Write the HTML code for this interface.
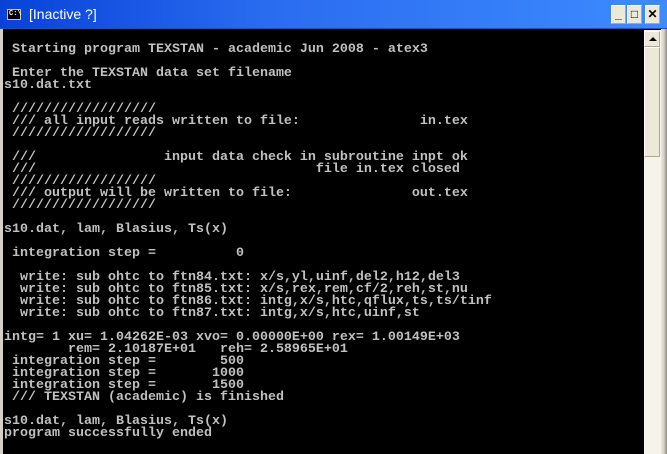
<!DOCTYPE html>
<html><head><style>
*{margin:0;padding:0;box-sizing:border-box}
body{width:667px;height:454px;overflow:hidden;background:#000;position:relative;font-family:"Liberation Sans",sans-serif}
.title{position:absolute;left:0;top:0;width:667px;height:29px;background:linear-gradient(90deg,#0842d8 0%,#2a6cf0 40%,#3d8bff 100%);border-bottom:1px solid #1a4fc8}
.title .txt{position:absolute;left:29px;top:6px;color:#fff;font-size:14px}
.icon{position:absolute;left:7px;top:9px;width:14px;height:11px;background:#000;border:1px solid #c0c0c0}
.icon span{position:absolute;left:1px;top:0;color:#fff;font:bold 7px "Liberation Mono",monospace;line-height:9px}
.btn{position:absolute;top:5px;width:15px;height:19px;background:#ece9d8;border:1px solid #fff;border-right-color:#aca899;border-bottom-color:#aca899;font:bold 12px "Liberation Sans",sans-serif;color:#000;text-align:center;line-height:17px}
.con{position:absolute;left:3px;top:30px;width:641px;height:424px;background:#000}
pre{position:absolute;left:4px;top:32px;font:bold 13.33px/12px "Liberation Mono",monospace;color:#c0c0c0;letter-spacing:0}
.sb{position:absolute;left:644px;top:30px;width:17px;height:424px;background:#f6f4ea}
.up{position:absolute;left:644px;top:31px;width:16px;height:16px;background:#ece9d8;border:1px solid #fff;border-right-color:#aca899;border-bottom-color:#aca899}
.up:after{content:"";position:absolute;left:4px;top:5px;border-left:4px solid transparent;border-right:4px solid transparent;border-bottom:4px solid #000}
.thumb{position:absolute;left:644px;top:47px;width:16px;height:110px;background:#ece9d8;border:1px solid #fff;border-right-color:#aca899;border-bottom-color:#aca899}
.frame{position:absolute;left:661px;top:29px;width:6px;height:425px;background:linear-gradient(90deg,#ece9d8,#d4d0c8 50%,#8a877a)}
.lframe{position:absolute;left:0;top:29px;width:3px;height:425px;background:#d4d0c8}
</style></head><body>
<div class="title"><div class="icon"><span>C:\</span></div><div class="txt">[Inactive ?]</div>
<div class="btn" style="left:611px">_</div><div class="btn" style="left:627px">□</div><div class="btn" style="left:645px">✕</div></div>
<div class="lframe"></div>
<div class="con"></div>
<pre>

 Starting program TEXSTAN - academic Jun 2008 - atex3

 Enter the TEXSTAN data set filename
s10.dat.txt

 //////////////////
 /// all input reads written to file:               in.tex
 //////////////////

 ///                input data check in subroutine inpt ok
 ///                                   file in.tex closed
 //////////////////
 /// output will be written to file:               out.tex
 //////////////////

s10.dat, lam, Blasius, Ts(x)

 integration step =          0

  write: sub ohtc to ftn84.txt: x/s,yl,uinf,del2,h12,del3
  write: sub ohtc to ftn85.txt: x/s,rex,rem,cf/2,reh,st,nu
  write: sub ohtc to ftn86.txt: intg,x/s,htc,qflux,ts,ts/tinf
  write: sub ohtc to ftn87.txt: intg,x/s,htc,uinf,st

intg= 1 xu= 1.04262E-03 xvo= 0.00000E+00 rex= 1.00149E+03
        rem= 2.10187E+01   reh= 2.58965E+01
 integration step =        500
 integration step =       1000
 integration step =       1500
 /// TEXSTAN (academic) is finished

s10.dat, lam, Blasius, Ts(x)
program successfully ended
</pre>
<div class="sb"></div><div class="up"></div><div class="thumb"></div>
<div class="frame"></div>
</body></html>
